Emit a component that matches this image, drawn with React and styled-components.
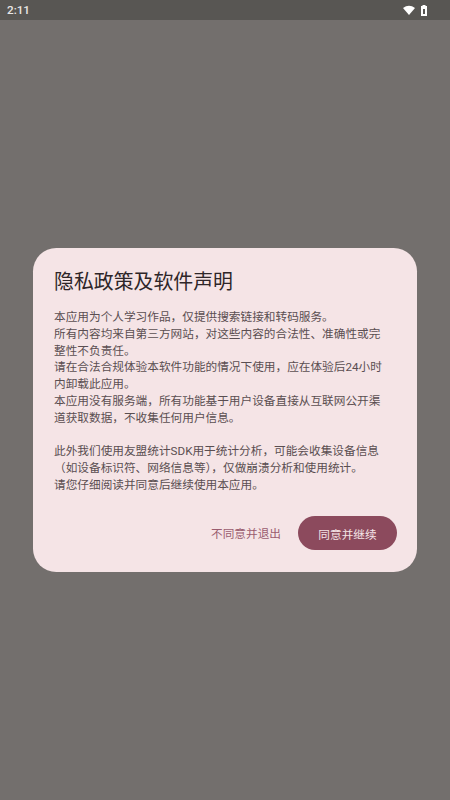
import React from "react";
import styled, { createGlobalStyle } from "styled-components";

const Global = createGlobalStyle`
  html, body { margin: 0; padding: 0; height: 100%; background: #736f6d; }
  #root { height: 100%; }
`;
const CJK = `"Roboto", "Noto Sans CJK SC", sans-serif`;

const Screen = styled.div`
  width: 450px; height: 800px; display: flex; flex-direction: column;
  background: #736f6d; font-family: ${CJK}; overflow: hidden;
`;
const StatusBar = styled.div`
  height: 20px; flex: none; background: #585653; display: flex; align-items: center;
  justify-content: space-between; padding: 0 23px 0 7px; color: #e9e7e6;
  font-size: 11.7px; font-weight: 500;
`;
const StatusIcons = styled.div`display: flex; align-items: center; gap: 6px;`;
const Center = styled.div`
  flex: 1; display: flex; align-items: center; justify-content: center;
`;
const Dialog = styled.div`
  width: 384px; height: 324px; box-sizing: border-box; background: #f5e4e6;
  border-radius: 23.3px; padding: 21px 20px 22px 21px; display: flex; flex-direction: column;
`;
const Title = styled.h1`
  margin: 0 0 12px; font-size: 19.9px; font-weight: 400; line-height: 28px; color: #2e2629;
`;
const Body = styled.div`
  font-size: 11.67px; line-height: 16.8px; color: #5a4e51; white-space: pre-wrap; flex: 1;
  margin-right: 10px;
`;
const Actions = styled.div`display: flex; justify-content: flex-end; align-items: center; gap: 17px;`;
const TextButton = styled.span`font-size: 11.67px; color: #9a5c6f; margin-top: -1px;`;
const FilledButton = styled.span`
  width: 99px; height: 34px; border-radius: 17px; background: #8c4a5d; color: #f5e4e6;
  font-size: 11.67px; display: flex; align-items: center; justify-content: center;
`;

const text = `本应用为个人学习作品，仅提供搜索链接和转码服务。
所有内容均来自第三方网站，对这些内容的合法性、准确性或完整性不负责任。
请在合法合规体验本软件功能的情况下使用，应在体验后24小时内卸载此应用。
本应用没有服务端，所有功能基于用户设备直接从互联网公开渠道获取数据，不收集任何用户信息。

此外我们使用友盟统计SDK用于统计分析，可能会收集设备信息（如设备标识符、网络信息等），仅做崩溃分析和使用统计。
请您仔细阅读并同意后继续使用本应用。`;

export default function App() {
  return (
    <Screen>
      <Global />
      <StatusBar>
        <span>2:11</span>
        <StatusIcons>
          <svg width="12" height="10" viewBox="0 0 12 10"><path d="M0 3 Q6 -1.5 12 3 L6 10 Z" fill="#fff" /></svg>
          <svg width="6" height="11" viewBox="0 0 6 11">
            <path fillRule="evenodd" d="M1.5 0h3v1H6v10H0V1h1.5z M2 4h2v5H2z" fill="#fff" />
          </svg>
        </StatusIcons>
      </StatusBar>
      <Center>
        <Dialog>
          <Title>隐私政策及软件声明</Title>
          <Body>{text}</Body>
          <Actions>
            <TextButton>不同意并退出</TextButton>
            <FilledButton>同意并继续</FilledButton>
          </Actions>
        </Dialog>
      </Center>
    </Screen>
  );
}
